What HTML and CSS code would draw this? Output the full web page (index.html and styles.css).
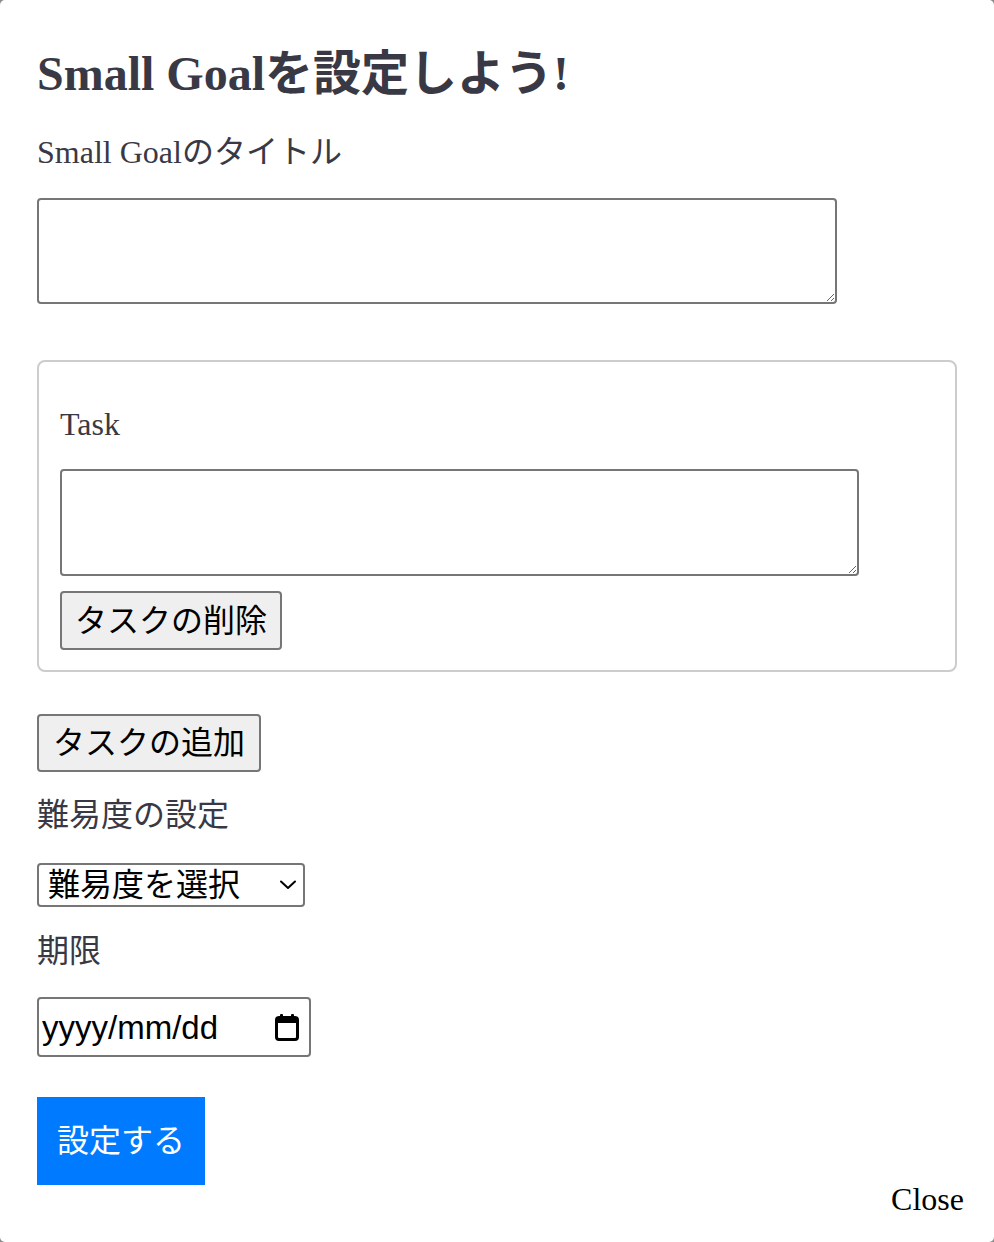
FILE: index.html
```html
<!DOCTYPE html>
<html lang="ja">
<head>
<meta charset="utf-8">
<title>Small Goal</title>
<link rel="stylesheet" href="styles.css">
</head>
<body>
<div class="modal">
  <h2 class="title">Small Goalを設定しよう!</h2>
  <form class="form">
    <label class="label">Small Goalのタイトル</label>
    <textarea class="textarea textarea-first"></textarea>
    <div class="task-box">
      <label class="label">Task</label>
      <textarea class="textarea textarea-task"></textarea>
      <button type="button" class="btn btn-delete">タスクの削除</button>
    </div>
    <button type="button" class="btn btn-add">タスクの追加</button>
    <label class="label label-level">難易度の設定</label>
    <div class="select-wrap">
      <select class="select"><option>難易度を選択</option></select>
      <svg class="chevron" width="18" height="10" viewBox="0 0 18 10">
        <path d="M2 1.5 L9 8 L16 1.5" fill="none" stroke="#000" stroke-width="2" stroke-linecap="round" stroke-linejoin="round"/>
      </svg>
    </div>
    <label class="label label-date">期限</label>
    <div class="date-input">
      <span class="date-text">yyyy/mm/dd</span>
      <svg class="cal-icon" width="24" height="27" viewBox="0 0 24 27">
        <rect x="5" y="0" width="3" height="5" rx="1" fill="#000"/>
        <rect x="16" y="0" width="3" height="5" rx="1" fill="#000"/>
        <rect x="1.5" y="3.5" width="21" height="22" rx="2.5" fill="none" stroke="#000" stroke-width="3"/>
        <rect x="1.5" y="4" width="21" height="5" fill="#000"/>
      </svg>
    </div>
    <button type="submit" class="submit">設定する</button>
  </form>
  <button type="button" class="close">Close</button>
</div>
</body>
</html>
```
FILE: styles.css
```css
html, body {
  margin: 0;
  padding: 0;
  background: #8a8a8a;
}
body {
  width: 994px;
  height: 1242px;
  overflow: hidden;
}
.modal {
  position: relative;
  box-sizing: border-box;
  width: 994px;
  height: 1242px;
  background: #fff;
  border-radius: 5px;
  padding: 46px 30px 0 37px;
  font-family: "Liberation Serif", "Noto Sans CJK JP", serif;
  color: #393945;
}
.title {
  margin: 0;
  font-size: 48px;
  line-height: 56px;
  font-weight: bold;
  color: #393945;
}
.form {
  display: flex;
  flex-direction: column;
  align-items: flex-start;
}
.label {
  display: block;
  font-size: 32px;
  line-height: 38px;
  color: #393945;
}
.form > .label:first-child {
  margin-top: 31px;
}
.textarea {
  box-sizing: border-box;
  display: block;
  width: 800px;
  height: 106px;
  border: 2px solid #767676;
  border-radius: 4px;
  margin: 27px 0 0 0;
  background: #fff;
  font-size: 26px;
}
.textarea-task {
  width: 799px;
  margin-top: 26px;
  height: 107px;
}
.task-box {
  box-sizing: border-box;
  width: 920px;
  margin-top: 56px;
  border: 2px solid #cccccc;
  border-radius: 8px;
  padding: 43px 20px 20px 21px;
  display: flex;
  flex-direction: column;
  align-items: flex-start;
}
.btn {
  box-sizing: border-box;
  font-family: "Liberation Serif", "Noto Sans CJK JP", serif;
  font-size: 32px;
  line-height: 1;
  color: #000;
  background: #efefef;
  border: 2px solid #767676;
  border-radius: 4px;
  padding: 0 13px;
  margin: 0;
}
.btn-delete {
  margin-top: 15px;
  height: 59px;
  width: 222px;
}
.btn-add {
  margin-top: 42px;
  height: 58px;
  width: 224px;
}
.label-level {
  margin-top: 24px;
}
.select-wrap {
  position: relative;
  margin-top: 29px;
  width: 268px;
  height: 44px;
}
.select {
  box-sizing: border-box;
  -webkit-appearance: none;
  appearance: none;
  display: block;
  width: 268px;
  height: 44px;
  margin: 0;
  font-family: "Liberation Serif", "Noto Sans CJK JP", serif;
  font-size: 32px;
  line-height: 40px;
  color: #000;
  background: #fff;
  border: 2px solid #767676;
  border-radius: 4px;
  padding: 0 40px 0 9px;
}
.chevron {
  position: absolute;
  right: 8px;
  top: 17px;
  pointer-events: none;
}
.label-date {
  margin-top: 25px;
}
.date-input {
  box-sizing: border-box;
  margin-top: 27px;
  width: 274px;
  height: 60px;
  border: 2px solid #767676;
  border-radius: 4px;
  display: flex;
  align-items: center;
  justify-content: space-between;
  padding: 0 10px 0 3px;
  background: #fff;
}
.date-text {
  font-family: "Liberation Sans", Arial, sans-serif;
  font-size: 33px;
  color: #000;
  line-height: 1;
}
.cal-icon {
  display: block;
}
.submit {
  box-sizing: border-box;
  margin-top: 40px;
  width: 168px;
  height: 88px;
  padding: 0 20px;
  border: none;
  background: #007bff;
  color: #fff;
  font-family: "Liberation Serif", "Noto Sans CJK JP", serif;
  font-size: 32px;
  line-height: 1;
}
.close {
  position: absolute;
  right: 30px;
  bottom: 24px;
  padding: 0;
  border: none;
  background: none;
  font-family: "Liberation Serif", serif;
  font-size: 32px;
  line-height: 38px;
  color: #000;
}
```
